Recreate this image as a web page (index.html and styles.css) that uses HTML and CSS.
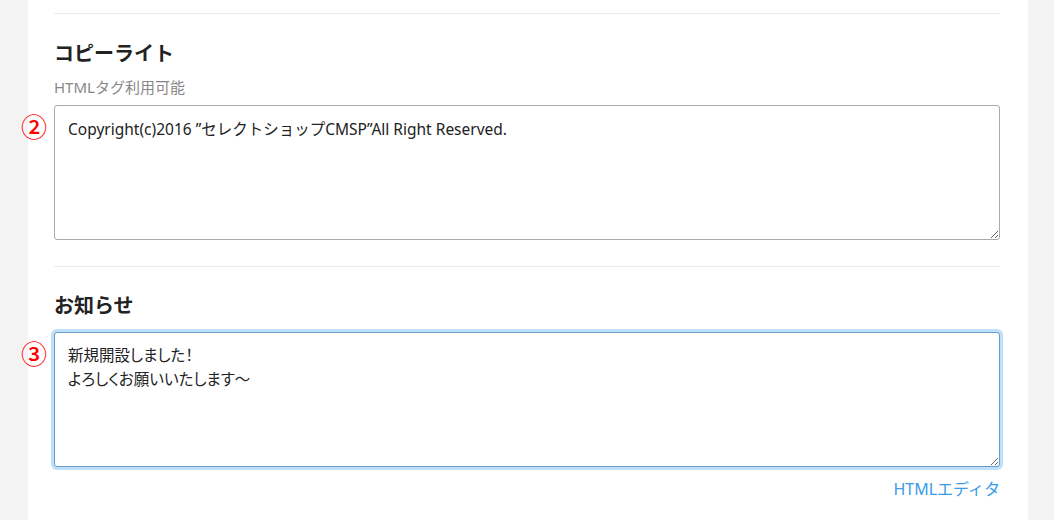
FILE: index.html
```html
<!DOCTYPE html>
<html lang="ja">
<head>
<meta charset="utf-8">
<link rel="stylesheet" href="styles.css">
</head>
<body>
<div class="card">
  <section class="section first">
    <h3 class="title">コピーライト</h3>
    <p class="note">HTMLタグ利用可能</p>
    <div class="field">
      <span class="marker">②</span>
      <textarea class="input">Copyright(c)2016 ”セレクトショップCMSP”All Right Reserved.</textarea>
    </div>
  </section>
  <section class="section">
    <h3 class="title title-b">お知らせ</h3>
    <div class="field">
      <span class="marker">③</span>
      <textarea class="input focused">新規開設しました！
よろしくお願いいたします～</textarea>
    </div>
    <div class="links"><a class="editor-link" href="#">HTMLエディタ</a></div>
  </section>
</div>
</body>
</html>
```
FILE: styles.css
```css
html, body {
  margin: 0;
  padding: 0;
}
body {
  background: #f3f3f3;
  font-family: "Noto Sans", "Noto Sans CJK JP", sans-serif;
  color: #222;
  height: 520px;
  overflow: hidden;
}
.card {
  margin: 0 26px 0 28px;
  background: #fff;
  padding: 13px 28px 0 26px;
  height: 520px;
  box-sizing: border-box;
}
.section {
  border-top: 1px solid #ebebeb;
  padding: 26px 0 26px;
}
.section + .section {
  padding-top: 25px;
}
.title {
  margin: 0;
  font-size: 20px;
  line-height: 28px;
  font-weight: 700;
  color: #222;
}
.title-b {
  margin-bottom: 12px;
}
.note {
  margin: 9px 0 8px;
  font-size: 15px;
  line-height: 20px;
  color: #888;
}
.field {
  position: relative;
}
.marker {
  position: absolute;
  left: -33px;
  top: 7px;
  font-size: 26px;
  line-height: 28px;
  font-weight: 500;
  color: #ff0000;
  font-family: "Noto Sans CJK JP", sans-serif;
  text-shadow: 0 0 3px #fff, 0 0 3px #fff;
}
.input {
  display: block;
  width: 100%;
  height: 135px;
  box-sizing: border-box;
  margin: 0;
  padding: 11px 13px;
  border: 1px solid #aaa;
  border-radius: 3px;
  font-family: "Noto Sans", "Noto Sans CJK JP", sans-serif;
  font-size: 15.5px;
  line-height: 24px;
  color: #222;
  background: #fff;
  outline: none;
  resize: vertical;
}
.input.focused {
  border-color: #6a9bc9;
  box-shadow: 0 0 0 3px #bfe0fb;
  padding-top: 10px;
  font-feature-settings: "palt";
}
.links {
  display: flex;
  justify-content: flex-end;
  margin-top: 12px;
}
.editor-link {
  font-size: 16px;
  line-height: 20px;
  color: #3a9be8;
  text-decoration: none;
}
```
